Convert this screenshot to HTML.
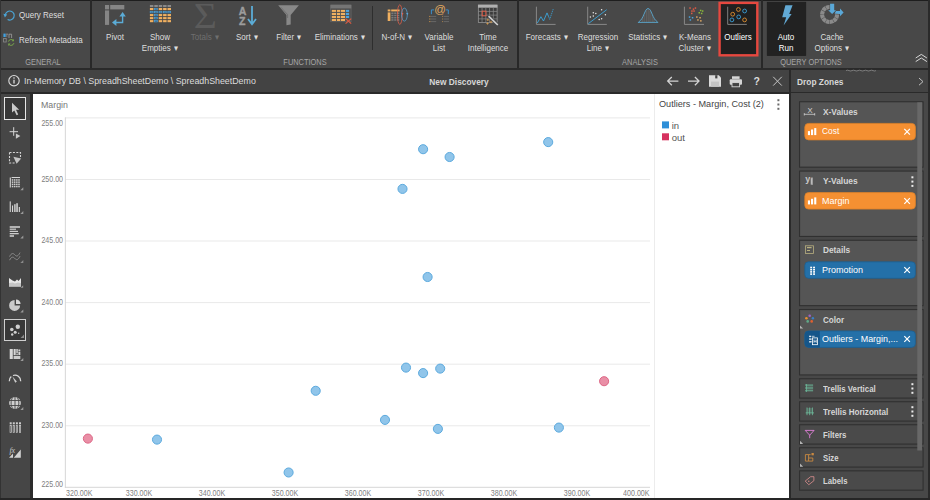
<!DOCTYPE html>
<html>
<head>
<meta charset="utf-8">
<title>Discovery</title>
<style>
html,body{margin:0;padding:0}
html{background:#474747}
body{width:930px;height:500px;position:relative;overflow:hidden;background:#474747;font-family:"Liberation Sans",sans-serif;color:#dcdcdc}
.a{position:absolute}
.t{position:absolute;white-space:pre;line-height:1;transform-origin:0 0}
.c{position:absolute;white-space:pre;line-height:1;transform-origin:50% 0;text-align:center}
/* ribbon */
.rl{font-size:9px;color:#dedede}            /* ribbon label */
.rl.c{transform:translateX(-50%) scaleX(.89)}
.rl.t{transform:scaleX(.89)}
.gl{font-size:9px;color:#a6a6a6}            /* group label */
.gl.c{transform:translateX(-50%) scaleX(.825)}
.dis{color:#6f6f6f}
.rl b{font-weight:normal;margin-left:3.4px}
.ax{font-size:8.2px;color:#808080}
.ax.t{transform:scaleX(.865)}
.ax.c{transform:translateX(-50%) scaleX(.865)}
.ax.r{transform-origin:100% 0;transform:scaleX(.865)}
.zt{font-size:9px;font-weight:bold;color:#d6d6d6}
.chip{position:absolute;left:804px;width:111px;height:17px;border-radius:4px;box-sizing:border-box}
.or{background:#f39233;border:1px solid #e38426}
.bl{background:#2470a8;border:1px solid #1d5f91}
.ct{font-size:9px;color:#fff}
.zone{position:absolute;left:799px;width:124px;box-sizing:border-box;border:1px solid #323232;background:#555}
.zs{background:#484848}
svg{position:absolute;overflow:visible}
</style>
</head>
<body>

<!-- ================= RIBBON ================= -->
<div class="a" style="left:0;top:0;width:930px;height:68px;background:#484848"></div>
<div class="a" style="left:0;top:0;width:930px;height:1px;background:#1e1e1e"></div>
<div class="a" style="left:0;top:68px;width:930px;height:2px;background:#2a2a2a"></div>
<!-- group separators -->
<div class="a" style="left:90px;top:0;width:2px;height:68px;background:#282828"></div>
<div class="a" style="left:517px;top:0;width:2px;height:68px;background:#282828"></div>
<div class="a" style="left:761px;top:0;width:2px;height:68px;background:#282828"></div>
<div class="a" style="left:372px;top:6px;width:1px;height:44px;background:#2e2e2e"></div>

<!-- GENERAL -->
<span class="t rl" style="left:18.6px;top:11px">Query Reset</span>
<span class="t rl" style="left:18.6px;top:35.5px">Refresh Metadata</span>
<span class="c gl" style="left:43.3px;top:57.5px">GENERAL</span>

<!-- FUNCTIONS -->
<span class="c rl" style="left:115.4px;top:33px">Pivot</span>
<span class="c rl" style="left:160.4px;top:33px">Show</span>
<span class="c rl" style="left:160.4px;top:43.5px">Empties<b>▾</b></span>
<span class="c rl dis" style="left:205px;top:33px">Totals<b>▾</b></span>
<span class="c rl" style="left:247px;top:33px">Sort<b>▾</b></span>
<span class="c rl" style="left:289px;top:33px">Filter<b>▾</b></span>
<span class="c rl" style="left:340px;top:33px">Eliminations<b>▾</b></span>
<span class="c rl" style="left:397px;top:33px">N-of-N<b>▾</b></span>
<span class="c rl" style="left:439px;top:33px">Variable</span>
<span class="c rl" style="left:439px;top:43.5px">List</span>
<span class="c rl" style="left:487.5px;top:33px">Time</span>
<span class="c rl" style="left:487.5px;top:43.5px">Intelligence</span>
<span class="c gl" style="left:304.6px;top:57.5px">FUNCTIONS</span>

<!-- ANALYSIS -->
<span class="c rl" style="left:546.5px;top:33px">Forecasts<b>▾</b></span>
<span class="c rl" style="left:598px;top:33px">Regression</span>
<span class="c rl" style="left:598px;top:43.5px">Line<b>▾</b></span>
<span class="c rl" style="left:648px;top:33px">Statistics<b>▾</b></span>
<span class="c rl" style="left:694.7px;top:33px">K-Means</span>
<span class="c rl" style="left:694.7px;top:43.5px">Cluster<b>▾</b></span>
<svg style="left:0;top:0" width="930" height="70" viewBox="0 0 930 70"><rect x="719.6" y="2.9" width="37.7" height="52.4" fill="#202020" stroke="#e6483f" stroke-width="2.4"/><rect x="767.2" y="2.2" width="38.6" height="53.4" fill="#222" stroke="#1c1c1c" stroke-width=".6"/></svg>
<span class="c rl" style="left:738px;top:33px;color:#fff">Outliers</span>
<span class="c gl" style="left:640.3px;top:57.5px">ANALYSIS</span>

<!-- QUERY OPTIONS -->
<span class="c rl" style="left:786.4px;top:33px;color:#fff">Auto</span>
<span class="c rl" style="left:786.4px;top:43.5px;color:#fff">Run</span>
<span class="c rl" style="left:831.5px;top:33px">Cache</span>
<span class="c rl" style="left:831.5px;top:43.5px">Options<b>▾</b></span>
<span class="c gl" style="left:810.5px;top:57.5px">QUERY OPTIONS</span>

<!-- ================= TITLE BAR ================= -->
<div class="a" style="left:0;top:70px;width:930px;height:22px;background:#434343"></div>
<div class="a" style="left:0;top:92px;width:930px;height:2px;background:#2a2a2a"></div>
<span class="t" style="left:23.8px;top:76px;font-size:9.5px;color:#dcdcdc;transform:scaleX(.93)">In-Memory DB \ SpreadhSheetDemo \ SpreadhSheetDemo</span>
<span class="c" style="left:459.2px;top:77px;font-size:9.5px;font-weight:bold;color:#d8d8d8;transform:translateX(-50%) scaleX(.88)">New Discovery</span>
<span class="t" style="left:797px;top:77px;font-size:9.5px;font-weight:bold;color:#d8d8d8;transform:scaleX(.88)">Drop Zones</span>


<!-- ================= RIBBON + TITLE ICONS ================= -->
<svg style="left:0;top:0" width="930" height="96" viewBox="0 0 930 96">
  <!-- query reset -->
  <path d="M5.3 14.6A4.5 4.5 0 1 1 7.6 19.5" fill="none" stroke="#4ba6d8" stroke-width="1.2"/>
  <path d="M3.4 13.7L7.2 14.4L4.9 17.5Z" fill="#4ba6d8"/>
  <!-- refresh metadata -->
  <rect x="3.4" y="33.6" width="2.3" height="3.4" fill="#3fa0e0"/>
  <path d="M6 34.2H8.2M6 36H7.4M9 38V34.2H11.6V38" stroke="#a0a0a0" stroke-width=".8" fill="none"/>
  <rect x="3.6" y="38.4" width="2.6" height="3.6" fill="none" stroke="#8c8c8c" stroke-width=".8"/>
  <path d="M8.3 41.6A3 3 0 0 1 13.2 40.3M13.9 43.2A3 3 0 0 1 9 44.6" fill="none" stroke="#7aa84a" stroke-width="1"/>
  <path d="M13.9 38.9V41.3H11.6ZM8.2 46V43.6H10.5Z" fill="#7aa84a"/>
  <!-- pivot -->
  <rect x="105" y="5" width="4.1" height="4.4" fill="#858585"/>
  <rect x="110.2" y="5" width="14.1" height="4.4" fill="#858585"/>
  <rect x="105" y="10.4" width="4.1" height="14.5" fill="#858585"/>
  <path d="M115.5 22.5H122.6V16" fill="none" stroke="#5bacd6" stroke-width="1.4"/>
  <path d="M112 22.5L116.4 19V26ZM122.6 12L125.8 16.6H119.4Z" fill="#5bacd6"/>
  <!-- show empties -->
  <rect x="149.90" y="5.00" width="3.5" height="2.1" fill="#8a8a8a"/><rect x="154.30" y="5.00" width="3.5" height="2.1" fill="#8a8a8a"/><rect x="158.70" y="5.00" width="3.5" height="2.1" fill="#8a8a8a"/><rect x="163.10" y="5.00" width="3.5" height="2.1" fill="#8a8a8a"/><rect x="167.50" y="5.00" width="3.5" height="2.1" fill="#8a8a8a"/><rect x="149.90" y="8.02" width="3.5" height="2.1" fill="#f0b060"/><rect x="154.60" y="8.32" width="2.9" height="1.5" fill="#3d5566" stroke="#4a9fd8" stroke-width=".7"/><rect x="158.70" y="8.02" width="3.5" height="2.1" fill="#f0b060"/><rect x="163.10" y="8.02" width="3.5" height="2.1" fill="#f0b060"/><rect x="167.50" y="8.02" width="3.5" height="2.1" fill="#f0b060"/><rect x="150.20" y="11.34" width="2.9" height="1.5" fill="#3d5566" stroke="#4a9fd8" stroke-width=".7"/><rect x="154.60" y="11.34" width="2.9" height="1.5" fill="#3d5566" stroke="#4a9fd8" stroke-width=".7"/><rect x="159.00" y="11.34" width="2.9" height="1.5" fill="#3d5566" stroke="#4a9fd8" stroke-width=".7"/><rect x="163.40" y="11.34" width="2.9" height="1.5" fill="#3d5566" stroke="#4a9fd8" stroke-width=".7"/><rect x="167.80" y="11.34" width="2.9" height="1.5" fill="#3d5566" stroke="#4a9fd8" stroke-width=".7"/><rect x="149.90" y="14.06" width="3.5" height="2.1" fill="#f0b060"/><rect x="154.60" y="14.36" width="2.9" height="1.5" fill="#3d5566" stroke="#4a9fd8" stroke-width=".7"/><rect x="158.70" y="14.06" width="3.5" height="2.1" fill="#f0b060"/><rect x="163.10" y="14.06" width="3.5" height="2.1" fill="#f0b060"/><rect x="167.50" y="14.06" width="3.5" height="2.1" fill="#f0b060"/><rect x="149.90" y="17.08" width="3.5" height="2.1" fill="#f0b060"/><rect x="154.60" y="17.38" width="2.9" height="1.5" fill="#3d5566" stroke="#4a9fd8" stroke-width=".7"/><rect x="158.70" y="17.08" width="3.5" height="2.1" fill="#f0b060"/><rect x="163.10" y="17.08" width="3.5" height="2.1" fill="#f0b060"/><rect x="167.50" y="17.08" width="3.5" height="2.1" fill="#f0b060"/><rect x="149.90" y="20.10" width="3.5" height="2.1" fill="#f0b060"/><rect x="154.60" y="20.40" width="2.9" height="1.5" fill="#3d5566" stroke="#4a9fd8" stroke-width=".7"/><rect x="158.70" y="20.10" width="3.5" height="2.1" fill="#f0b060"/><rect x="163.10" y="20.10" width="3.5" height="2.1" fill="#f0b060"/><rect x="167.50" y="20.10" width="3.5" height="2.1" fill="#f0b060"/>
  <!-- totals -->
  <text x="205.2" y="27.7" font-family="Liberation Serif" font-size="35.5" fill="#5b5b5b" text-anchor="middle" transform="translate(205.2 0) scale(1.12 1) translate(-205.2 0)">Σ</text>
  <!-- sort -->
  <text x="242.5" y="14.5" font-family="Liberation Sans" font-weight="bold" font-size="10.6" fill="#9c9c9c" stroke="#9c9c9c" stroke-width=".35" text-anchor="middle">A</text>
  <text x="242.3" y="25" font-family="Liberation Sans" font-weight="bold" font-size="10.6" fill="#9c9c9c" stroke="#9c9c9c" stroke-width=".35" text-anchor="middle">Z</text>
  <path d="M252 5.9V23.4M248 19L252 24.2L256 19" fill="none" stroke="#5bacd6" stroke-width="1.8"/>
  <!-- filter -->
  <path d="M278.2 5.2H298.9L290.7 15V24.6L286.4 25.2V15Z" fill="#888"/>
  <path d="M281 7.3L287.6 14.6V18" fill="none" stroke="#5a5a5a" stroke-width=".5"/>
  <!-- eliminations -->
  <rect x="330.7" y="5" width="20.4" height="16.8" fill="#505050" stroke="#6a6a6a" stroke-width=".6"/><rect x="330.5" y="4.8" width="20.8" height="3.6" fill="#757575"/><rect x="331.8" y="9.9" width="4.30" height="2.00" fill="#f0b060"/><rect x="331.8" y="12.9" width="4.30" height="2.10" fill="#f0b060"/><rect x="331.8" y="15.9" width="4.30" height="2.10" fill="#f0b060"/><rect x="331.8" y="18.9" width="4.30" height="2.10" fill="#f0b060"/><rect x="337" y="9.9" width="3.20" height="2.00" fill="#f0b060"/><rect x="337" y="12.9" width="3.20" height="2.10" fill="#f0b060"/><rect x="337" y="15.9" width="3.20" height="2.10" fill="#f0b060"/><rect x="337" y="18.9" width="3.20" height="2.10" fill="#f0b060"/><rect x="341" y="9.9" width="4.00" height="2.00" fill="#f0b060"/><rect x="341" y="12.9" width="4.00" height="2.10" fill="#f0b060"/><rect x="341" y="15.9" width="4.00" height="2.10" fill="#f0b060"/><rect x="341" y="18.9" width="4.00" height="2.10" fill="#f0b060"/><rect x="345.8" y="9.9" width="3.3" height="2.00" fill="#4aa3df"/><rect x="345.8" y="12.9" width="3.3" height="2.10" fill="#4aa3df"/><rect x="345.8" y="15.9" width="3.3" height="2.10" fill="#4aa3df"/><path d="M345.6 18.6L351.2 23.6M351.2 18.6L345.6 23.6" stroke="#e05a40" stroke-width="1.1" fill="none"/>
  <!-- n-of-n -->
  <rect x="387.7" y="9.5" width="2.7" height="1.9" fill="#f0b060"/><rect x="391.2" y="9.5" width="8.4" height="1.9" fill="#f0b060"/><rect x="387.7" y="12.4" width="2.7" height="8.6" fill="#f0b060"/><rect x="391.30" y="12.50" width="2.2" height="1.5" fill="#7a7a7a"/><rect x="394.20" y="12.50" width="2.2" height="1.5" fill="#7a7a7a"/><rect x="397.10" y="12.50" width="2.2" height="1.5" fill="#7a7a7a"/><rect x="391.30" y="14.75" width="2.2" height="1.5" fill="#7a7a7a"/><rect x="394.20" y="14.75" width="2.2" height="1.5" fill="#7a7a7a"/><rect x="397.10" y="14.75" width="2.2" height="1.5" fill="#7a7a7a"/><rect x="391.30" y="17.00" width="2.2" height="1.5" fill="#7a7a7a"/><rect x="394.20" y="17.00" width="2.2" height="1.5" fill="#7a7a7a"/><rect x="397.10" y="17.00" width="2.2" height="1.5" fill="#7a7a7a"/><rect x="391.30" y="19.25" width="2.2" height="1.5" fill="#7a7a7a"/><rect x="394.20" y="19.25" width="2.2" height="1.5" fill="#7a7a7a"/><rect x="397.10" y="19.25" width="2.2" height="1.5" fill="#7a7a7a"/><ellipse cx="399.8" cy="14.6" rx="2.4" ry="9.8" fill="none" stroke="#e0604a" stroke-width=".8"/><path d="M401.3 12.9h2.2l-1.1 2.4z" fill="#e0604a"/><ellipse cx="404.4" cy="14.6" rx="2.9" ry="6.5" fill="none" stroke="#5aa8dc" stroke-width=".7"/><path d="M406.2 12.9h2.2l-1.1 2.4z" fill="#5aa8dc"/>
  <!-- variable list -->
  <text x="440" y="13.4" font-family="Liberation Sans" font-size="11.5" fill="#e0a860" text-anchor="middle">@</text><path d="M434 9.9H431.4V14.2M445.8 9.9H448.3V14.2" stroke="#3a96d8" stroke-width=".9" fill="none"/><path d="M429 16.4h1.6" stroke="#c8924a" stroke-width=".8"/><path d="M430.8 16.4h5.4" stroke="#6c6c6c" stroke-width=".9"/><path d="M442 16.4h.9" stroke="#c8924a" stroke-width=".8"/><path d="M443.6 16.4h5.4" stroke="#6c6c6c" stroke-width=".9"/><path d="M429 19h1.6" stroke="#c8924a" stroke-width=".8"/><path d="M430.8 19h5.4" stroke="#6c6c6c" stroke-width=".9"/><path d="M442 19h.9" stroke="#c8924a" stroke-width=".8"/><path d="M443.6 19h5.4" stroke="#6c6c6c" stroke-width=".9"/><path d="M429 21.6h1.6" stroke="#c8924a" stroke-width=".8"/><path d="M430.8 21.6h5.4" stroke="#6c6c6c" stroke-width=".9"/><path d="M442 21.6h.9" stroke="#c8924a" stroke-width=".8"/><path d="M443.6 21.6h5.4" stroke="#6c6c6c" stroke-width=".9"/>
  <!-- time intelligence -->
  <rect x="478.3" y="5" width="18.8" height="17.6" fill="#3c3c3c" stroke="#a0a0a0" stroke-width=".7"/><rect x="478" y="4.8" width="19.4" height="2.9" fill="#b0b0b0"/><path d="M482.06 7.7V22.6M485.82 7.7V22.6M489.58 7.7V22.6M493.34 7.7V22.6M478.3 11.42H497.1M478.3 15.14H497.1M478.3 18.86H497.1" stroke="#8c8c8c" stroke-width=".7" fill="none"/><rect x="482.2" y="11.2" width="3.7" height="4.6" fill="#3c3c3c" stroke="#e0604a" stroke-width="1"/><path d="M488.6 16.2L497.8 25" stroke="#484848" stroke-width="3.2"/><path d="M488.6 16.2L497.8 25" stroke="#cfcfcf" stroke-width="1.7"/><path d="M486.6 19.9H489.0M487.8 18.7V21.099999999999998" stroke="#d09a50" stroke-width=".8"/><path d="M489.8 22H492.2M491 20.8V23.2" stroke="#d09a50" stroke-width=".8"/><path d="M486.3 23.5H488.7M487.5 22.3V24.7" stroke="#d09a50" stroke-width=".8"/>
  <!-- forecasts -->
  <path d="M536.4 6.7V24.4H555.6" fill="none" stroke="#909090" stroke-width=".9"/>
  <path d="M537.3 23L540.9 16.7L543.5 21L547 12.9L548.6 16.6" fill="none" stroke="#3aa6dc" stroke-width=".9"/>
  <path d="M548.6 16.6L549.7 19.4L553.2 9.1" fill="none" stroke="#3aa6dc" stroke-width=".9" stroke-dasharray="1.2 .9"/>
  <!-- regression -->
  <path d="M587.7 6.7V24.4H606.8" fill="none" stroke="#909090" stroke-width=".9"/>
  <path d="M588.4 23.6L606.7 9.7" stroke="#3aa6dc" stroke-width=".9"/>
  <g fill="#e8e8e8"><circle cx="593.3" cy="12.7" r=".75"/><circle cx="595.8" cy="13.4" r=".75"/><circle cx="593.3" cy="15.9" r=".75"/><circle cx="590.4" cy="17" r=".75"/><circle cx="601.6" cy="9.7" r=".75"/><circle cx="605.4" cy="14.8" r=".75"/><circle cx="599.2" cy="19.6" r=".75"/><circle cx="601.6" cy="18.8" r=".75"/></g>
  <!-- statistics -->
  <path d="M642.2 18.4V22M644.1 14.6V22M646.2 10.4V22M648.1 8.8V22M650 10.4V22M652.1 14.6V22M654 18.4V22" stroke="#808080" stroke-width=".6"/>
  <path d="M638.6 22C644 19 644.6 8.5 648.1 8.5C651.6 8.5 652.2 19 657.6 22" fill="none" stroke="#5aa8d0" stroke-width=".9"/>
  <path d="M637.9 22.4H658.2" stroke="#5aa8d0" stroke-width=".9"/>
  <!-- k-means -->
  <path d="M684.4 6.7V24.4H704" fill="none" stroke="#909090" stroke-width=".9"/>
  <g fill="#e05a45"><rect x="689.3" y="7.3" width="1.5" height="1.5"/><rect x="692.7" y="8.4" width="1.5" height="1.5"/><rect x="694.7" y="7.3" width="1.5" height="1.5"/><rect x="691.2" y="10.3" width="1.5" height="1.5"/><rect x="693.3" y="10.3" width="1.5" height="1.5"/><rect x="691" y="12.7" width="1.5" height="1.5"/></g>
  <g fill="#8ab83a"><rect x="699.9" y="9.7" width="1.5" height="1.5"/><rect x="701.9" y="10.3" width="1.5" height="1.5"/><rect x="698.5" y="12" width="1.5" height="1.5"/><rect x="700.9" y="12.7" width="1.5" height="1.5"/></g>
  <g fill="#4aa3df"><rect x="688.8" y="16.3" width="1.5" height="1.5"/><rect x="691.8" y="17" width="1.5" height="1.5"/><rect x="689.6" y="19.2" width="1.5" height="1.5"/></g>
  <g fill="#e0a860"><rect x="696.1" y="16.3" width="1.5" height="1.5"/><rect x="699.3" y="17" width="1.5" height="1.5"/><rect x="697.2" y="19.2" width="1.5" height="1.5"/><rect x="700.1" y="20.1" width="1.5" height="1.5"/></g>
  <!-- outliers -->
  <path d="M727.7 6.7V24.4H746.8" fill="none" stroke="#8a8a8a" stroke-width=".9"/>
  <g fill="none" stroke-width=".9"><g stroke="#e09030"><circle cx="738.4" cy="9.5" r="1.9"/><circle cx="732.7" cy="14.2" r="1.9"/><circle cx="744.6" cy="19.9" r="1.9"/></g><g stroke="#3aa0d8"><circle cx="744.6" cy="11" r="1.9"/><circle cx="738.7" cy="16.9" r="1.9"/><circle cx="731.9" cy="19.9" r="1.9"/></g></g>
  <!-- auto run lightning -->
  <path d="M785.4 5.2H792.6L789.2 14H791.6L783.6 25.6L786.2 17.2H782.2Z" fill="#62a9d4"/>
  <!-- cache options -->
  <circle cx="829.6" cy="14.5" r="7.5" fill="none" stroke="#8a8a8a" stroke-width="4.1" stroke-dasharray="3.5 .43" transform="rotate(-90 829.6 14.5)"/>
  <path d="M829.6 14.5L829.6 2L846 2L846 12.2Z" fill="#484848"/>
  <path d="M830.1 3.8H834.2V10.2H836L832.1 13.9L828.2 10.2H830.1Z" fill="#5aa8d8"/>
  <path d="M834.6 13.6L836 10.9H840V8.6L843.6 12.4L840 16.2V13.9Z" fill="#5aa8d8"/>
  <!-- collapse chevrons -->
  <path d="M915.7 58L921.3 54.4L926.9 58M915.7 61.6L921.3 58L926.9 61.6" fill="none" stroke="#d8d8d8" stroke-width="1"/>

  <!-- title bar icons -->
  <circle cx="14" cy="80.7" r="5.2" fill="none" stroke="#dcdcdc" stroke-width="1.1"/>
  <path d="M14 79.8V83.6" stroke="#dcdcdc" stroke-width="1.3"/><circle cx="14" cy="78" r=".8" fill="#dcdcdc"/>
  <path d="M678.4 81.1H668M671.8 77L667.7 81.1L671.8 85.2" fill="none" stroke="#d4d4d4" stroke-width="1.3"/>
  <path d="M688 81.1H698.6M694.9 77L699 81.1L694.9 85.2" fill="none" stroke="#d4d4d4" stroke-width="1.3"/>
  <path d="M709 75.2H718.8L721 77.4V86.8H709Z" fill="#dadada"/>
  <rect x="715.2" y="75.2" width="2.2" height="3.2" fill="#434343"/>
  <rect x="711" y="81.6" width="8" height="5.2" fill="#c4c4c4"/>
  <!-- printer -->
  <rect x="732" y="76.3" width="7.6" height="2.6" fill="#d6d6d6"/>
  <rect x="729.7" y="79.2" width="12.3" height="5.6" rx="1" fill="#d6d6d6"/>
  <rect x="732" y="82.6" width="7.6" height="4.2" fill="#434343" stroke="#d6d6d6" stroke-width=".9"/>
  <text x="756.7" y="84.8" font-family="Liberation Sans" font-weight="bold" font-size="10.5" fill="#dcdcdc" text-anchor="middle">?</text>
  <path d="M773.2 76.8L781.8 85.6M781.8 76.8L773.2 85.6" stroke="#c6c6c6" stroke-width="1"/>
  <path d="M919 78L923 81.6L919 85.2" fill="none" stroke="#c0c0c0" stroke-width="1"/>
  <path d="M846 70.6q1.5-.9 3 0t3 0t3 0t3 0t3 0t3 0t3 0t3 0t3 0t3 0" fill="none" stroke="#a0a0a0" stroke-width=".6"/>
</svg>

<!-- ================= LEFT TOOLBAR ================= -->
<div class="a" style="left:0;top:94px;width:30px;height:406px;background:#464646"></div>
<div class="a" style="left:30px;top:94px;width:2.5px;height:406px;background:#2c2c2c"></div>
<div class="a" style="left:0;top:0;width:1px;height:500px;background:#333"></div>
<div class="a" style="left:928.3px;top:0;width:1.7px;height:500px;background:#2a2a2a;z-index:5"></div>
<div class="a" style="left:4px;top:97px;width:22px;height:23px;box-sizing:border-box;border:1px solid #e6e6e6;background:#383838"></div>
<div class="a" style="left:4px;top:318.5px;width:22px;height:22px;box-sizing:border-box;border:1px solid #cfcfcf;background:#383838"></div>

<svg style="left:0;top:0" width="34" height="500" viewBox="0 0 34 500">
  <path d="M12 102.8V112.4L14.3 110.4L16.6 115.2L18.2 114.4L16 109.8H19.2Z" fill="#cacaca"/>
  <path d="M9.6 131.7H18M13.7 127.2V135.8" stroke="#d6d6d6" stroke-width="1" fill="none"/>
  <path d="M15.9 133.4L20.4 136L15.9 138.8Z" fill="#c8c8c8"/>
  <path d="M9.5 152.5H20.5V158" stroke="#d6d6d6" stroke-width="1.1" fill="none" stroke-dasharray="2 1.4"/>
  <path d="M9.5 152.5V163H15" stroke="#d6d6d6" stroke-width="1.1" fill="none" stroke-dasharray="2 1.4"/>
  <path d="M13.4 156.8L21.2 158.4L16.6 163.8Z" fill="#c4c4c4"/>
  <path d="M10.3 177.4V187.6" stroke="#d6d6d6" stroke-width="1.1"/><path d="M11.6 177.5H20" stroke="#d6d6d6" stroke-width="1"/><rect x="11.80" y="179.20" width="1.5" height="1.5" fill="#cfcfcf"/><rect x="13.95" y="179.20" width="1.5" height="1.5" fill="#cfcfcf"/><rect x="16.10" y="179.20" width="1.5" height="1.5" fill="#cfcfcf"/><rect x="18.25" y="179.20" width="1.5" height="1.5" fill="#cfcfcf"/><rect x="11.80" y="181.40" width="1.5" height="1.5" fill="#cfcfcf"/><rect x="13.95" y="181.40" width="1.5" height="1.5" fill="#cfcfcf"/><rect x="16.10" y="181.40" width="1.5" height="1.5" fill="#cfcfcf"/><rect x="18.25" y="181.40" width="1.5" height="1.5" fill="#cfcfcf"/><rect x="11.80" y="183.60" width="1.5" height="1.5" fill="#cfcfcf"/><rect x="13.95" y="183.60" width="1.5" height="1.5" fill="#cfcfcf"/><rect x="16.10" y="183.60" width="1.5" height="1.5" fill="#cfcfcf"/><rect x="18.25" y="183.60" width="1.5" height="1.5" fill="#cfcfcf"/><rect x="11.80" y="185.80" width="1.5" height="1.5" fill="#cfcfcf"/><rect x="13.95" y="185.80" width="1.5" height="1.5" fill="#cfcfcf"/><rect x="16.10" y="185.80" width="1.5" height="1.5" fill="#cfcfcf"/><rect x="18.25" y="185.80" width="1.5" height="1.5" fill="#cfcfcf"/>
  <path d="M23.3 187.2V190.2H20.3Z" fill="#9a9a9a"/>
  <rect x="9.7" y="201.4" width="1.1" height="10.6" fill="#d6d6d6"/>
  <rect x="12" y="205.5" width="1.1" height="6.5" fill="#d6d6d6"/>
  <rect x="14.2" y="204.2" width="1.4" height="7.8" fill="#d6d6d6"/>
  <rect x="16.3" y="203.2" width="1.5" height="8.8" fill="#d6d6d6"/>
  <rect x="18.8" y="207" width="1.1" height="5.0" fill="#d6d6d6"/>
  <path d="M23.3 211V214H20.3Z" fill="#9a9a9a"/>
  <rect x="9.7" y="226.2" width="10.3" height="1.6" fill="#cdcdcd"/>
  <rect x="9.7" y="228.6" width="6.3" height="1.2" fill="#cdcdcd"/>
  <rect x="9.7" y="230.8" width="8.3" height="1.2" fill="#cdcdcd"/>
  <rect x="9.7" y="233" width="9.0" height="1.3" fill="#cdcdcd"/>
  <rect x="9.7" y="235.2" width="4.3" height="1.6" fill="#cdcdcd"/>
  <path d="M23.3 235.5V238.5H20.3Z" fill="#9a9a9a"/>
  <path d="M9.6 256.6C11.5 252.5 13.5 253.2 15 255C16.5 256.8 18.2 256.4 20 252.6M9.6 260.2C11.5 256.1 13.5 256.8 15 258.6C16.5 260.4 18.2 260 20 256.2" stroke="#8c8c8c" stroke-width="1" fill="none"/>
  <path d="M23.3 260V263H20.3Z" fill="#8a8a8a"/>
  <path d="M9 278L12.5 280.6L15 281.6L17 279.6L18.6 281L21 278V286.6H9Z" fill="#e6e6e6"/>
  <path d="M9 283L12.5 282.6L15 283.4L18 282.4L21 283.2V286.6H9Z" fill="#c4c4c4"/>
  <path d="M23.200000000000003 285.2V287.8H20.6Z" fill="#9a9a9a"/>
  <path d="M14.6 305.4V299.9A5.5 5.5 0 1 0 20.1 305.4Z" fill="#cacaca"/>
  <path d="M16 304V299.4A4.6 4.6 0 0 1 20.6 304Z" fill="#d8d8d8"/>
  <path d="M23.3 309.5V312.5H20.3Z" fill="#9a9a9a"/>
  <circle cx="17.8" cy="326.8" r="2.2" fill="#d0d0d0"/>
  <circle cx="11.8" cy="329.5" r="1.8" fill="#d0d0d0"/>
  <circle cx="15.2" cy="332.2" r="1.5" fill="#d0d0d0"/>
  <circle cx="12.2" cy="334.5" r="1.2" fill="#d0d0d0"/>
  <circle cx="18.7" cy="333.3" r="0.7" fill="#d0d0d0"/>
  <path d="M24.0 334.6V338.0H20.6Z" fill="#8a8a8a"/>
  <rect x="9.7" y="349" width="3.1" height="10" fill="#d8d8d8"/><rect x="13.6" y="349" width="2.1" height="6.2" fill="#d8d8d8"/><rect x="16.3" y="349" width="1.5" height="4" fill="#d0d0d0"/><rect x="18.4" y="349.5" width="1.9" height="1.5" fill="#d0d0d0"/><rect x="18.4" y="351.6" width="1.9" height="3.5" fill="#d8d8d8"/><rect x="16.3" y="353.6" width="1.5" height="1.6" fill="#c8c8c8"/><rect x="13.6" y="356" width="6.7" height="3" fill="#cccccc"/>
  <path d="M23.3 358V361H20.3Z" fill="#9a9a9a"/>
  <path d="M9.3 381.2A5.8 5.8 0 0 1 11.3 376.6M13 375.5A5.8 5.8 0 0 1 20.7 381.2" stroke="#d8d8d8" stroke-width="1.3" fill="none"/>
  <path d="M12.3 376.2L16.9 381.6L15.2 382.8Z" fill="#cccccc"/>
  <circle cx="15" cy="403" r="5.9" fill="#cfcfcf"/>
  <path d="M9 400.5H21M9 405.5H21M15 397V409" stroke="#464646" stroke-width=".9" fill="none"/>
  <path d="M12.6 397.5C10.6 401 10.6 405 12.6 408.5M17.4 397.5C19.4 401 19.4 405 17.4 408.5" stroke="#464646" stroke-width=".9" fill="none"/>
  <path d="M23.3 407V410H20.3Z" fill="#9a9a9a"/>
  <rect x="9.7" y="422.3" width="2" height="2" fill="#cccccc"/><rect x="10.049999999999999" y="425.4" width="1.3" height="7" fill="none" stroke="#cccccc" stroke-width=".7"/>
  <rect x="12.8" y="422.3" width="2" height="2" fill="#cccccc"/><rect x="13.15" y="425.4" width="1.3" height="7" fill="none" stroke="#cccccc" stroke-width=".7"/>
  <rect x="15.9" y="422.3" width="2" height="2" fill="#cccccc"/><rect x="16.25" y="425.4" width="1.3" height="7" fill="none" stroke="#cccccc" stroke-width=".7"/>
  <rect x="19" y="422.3" width="2" height="2" fill="#cccccc"/><rect x="19.35" y="425.4" width="1.3" height="7" fill="none" stroke="#cccccc" stroke-width=".7"/>
  <text x="9.4" y="453" font-family="Liberation Serif" font-style="italic" font-size="8" fill="#cacaca">fx</text>
  <path d="M9 457.7L13 453.4V457.7ZM13.8 457.7L20.8 449.4V457.7Z" fill="#d2d2d2"/>
</svg>

<!-- ================= CHART PANEL ================= -->
<div class="a" style="left:32.5px;top:94px;width:756.5px;height:404.2px;background:#fff"></div>
<div class="a" style="left:0;top:498.2px;width:930px;height:1.8px;background:#262626;z-index:5"></div>
<span class="t" style="left:41px;top:100.5px;font-size:9px;color:#777;transform:scaleX(.98)">Margin</span>

<svg style="left:0;top:0" width="930" height="500" viewBox="0 0 930 500">
  <g stroke="#e9e9e9" stroke-width="1" fill="none">
    <path d="M65 117.9H650M65 179.5H650M65 241H650M65 302.6H650M65 364.2H650M65 425.8H650"/>
  </g>
  <path d="M65.35 117.4V487.8M64.9 487.3H650" stroke="#d6d6d6" stroke-width="1" fill="none"/>
  <path d="M654.5 94V498" stroke="#ececec" stroke-width="1" fill="none"/>
  <rect x="662" y="121.4" width="7" height="7" fill="#2e8fd8"/><rect x="662" y="133.3" width="7" height="7" fill="#d6325f"/>
  <g fill="#90c5ea" stroke="#5caade" stroke-width="1">
    <circle cx="157.0" cy="439.6" r="4.55"/>
    <circle cx="288.6" cy="472.5" r="4.55"/>
    <circle cx="315.7" cy="390.8" r="4.55"/>
    <circle cx="406.0" cy="367.6" r="4.55"/>
    <circle cx="423.1" cy="373.1" r="4.55"/>
    <circle cx="440.2" cy="368.6" r="4.55"/>
    <circle cx="385.0" cy="419.9" r="4.55"/>
    <circle cx="437.9" cy="428.9" r="4.55"/>
    <circle cx="558.9" cy="427.6" r="4.55"/>
    <circle cx="423.1" cy="149.2" r="4.55"/>
    <circle cx="449.6" cy="157.0" r="4.55"/>
    <circle cx="548.2" cy="142.1" r="4.55"/>
    <circle cx="402.5" cy="188.9" r="4.55"/>
    <circle cx="427.6" cy="277.0" r="4.55"/>
  </g>
  <g fill="#e98fa6" stroke="#dd6685" stroke-width="1">
    <circle cx="87.9" cy="438.6" r="4.55"/>
    <circle cx="604.1" cy="381.2" r="4.55"/>
  </g>
</svg>

<!-- y labels -->
<span class="t ax r" style="right:866.5px;top:119.5px">255.00</span>
<span class="t ax r" style="right:866.5px;top:176px">250.00</span>
<span class="t ax r" style="right:866.5px;top:236.5px">245.00</span>
<span class="t ax r" style="right:866.5px;top:299px">240.00</span>
<span class="t ax r" style="right:866.5px;top:359.5px">235.00</span>
<span class="t ax r" style="right:866.5px;top:422px">230.00</span>
<span class="t ax r" style="right:866.5px;top:480.5px">225.00</span>
<!-- x labels -->
<span class="t ax" style="left:65.5px;top:489.5px">320.00K</span>
<span class="c ax" style="left:139px;top:489.5px">330.00K</span>
<span class="c ax" style="left:212px;top:489.5px">340.00K</span>
<span class="c ax" style="left:285px;top:489.5px">350.00K</span>
<span class="c ax" style="left:358px;top:489.5px">360.00K</span>
<span class="c ax" style="left:431px;top:489.5px">370.00K</span>
<span class="c ax" style="left:504px;top:489.5px">380.00K</span>
<span class="c ax" style="left:577px;top:489.5px">390.00K</span>
<span class="t ax r" style="right:280.5px;top:489.5px">400.00K</span>

<!-- legend -->
<span class="t" style="left:659.2px;top:98.6px;font-size:9.5px;color:#444;transform:scaleX(.96)">Outliers - Margin, Cost (2)</span>
<span class="t" style="left:671.7px;top:121px;font-size:9.5px;color:#555">in</span>
<span class="t" style="left:671.7px;top:133px;font-size:9.5px;color:#555">out</span>

<!-- ================= DROP ZONES ================= -->
<div class="a" style="left:789px;top:70px;width:2px;height:430px;background:#2a2a2a"></div>
<div class="a" style="left:791px;top:93px;width:139px;height:405.2px;background:#484848"></div>


<svg style="left:0;top:0" width="930" height="500" viewBox="0 0 930 500">
  <rect x="799.55" y="101.75" width="123.5" height="65.40" fill="#555555" stroke="#303030" stroke-width="1.1"/>
  <rect x="799.55" y="171.05" width="123.5" height="65.40" fill="#555555" stroke="#303030" stroke-width="1.1"/>
  <rect x="799.55" y="240.25" width="123.5" height="65.40" fill="#555555" stroke="#303030" stroke-width="1.1"/>
  <rect x="799.55" y="309.55" width="123.5" height="65.40" fill="#555555" stroke="#303030" stroke-width="1.1"/>
  <rect x="799.55" y="378.75" width="123.5" height="19.30" fill="#4a4a4a" stroke="#303030" stroke-width="1.1"/>
  <rect x="799.55" y="401.75" width="123.5" height="19.30" fill="#4a4a4a" stroke="#303030" stroke-width="1.1"/>
  <rect x="799.55" y="424.75" width="123.5" height="19.30" fill="#4a4a4a" stroke="#303030" stroke-width="1.1"/>
  <rect x="799.55" y="447.75" width="123.5" height="19.30" fill="#4a4a4a" stroke="#303030" stroke-width="1.1"/>
  <rect x="799.55" y="470.85" width="123.5" height="19.30" fill="#4a4a4a" stroke="#303030" stroke-width="1.1"/>
  <rect x="804.8" y="123.40" width="110.6" height="16.5" rx="3.8" fill="#f59032" stroke="#dd8128" stroke-width=".8"/>
  <rect x="804.8" y="192.60" width="110.6" height="16.5" rx="3.8" fill="#f59032" stroke="#dd8128" stroke-width=".8"/>
  <rect x="804.8" y="261.80" width="110.6" height="16.5" rx="3.8" fill="#2470a8" stroke="#1c5f92" stroke-width=".8"/>
  <rect x="804.8" y="330.90" width="110.6" height="16.5" rx="3.8" fill="#2470a8" stroke="#1c5f92" stroke-width=".8"/>
  <path d="M819.8 330.9V347.4H808.6A3.8 3.8 0 0 1 804.8 343.6V334.7A3.8 3.8 0 0 1 808.6 330.9Z" fill="#15568a"/>
  <rect x="917.3" y="102.3" width="4.8" height="348.2" fill="#686868"/>
</svg>
<span class="t zt" style="left:822.8px;top:108px;transform:scaleX(0.925)">X-Values</span>
<span class="t zt" style="left:822.8px;top:177px;transform:scaleX(0.937)">Y-Values</span>
<span class="t zt" style="left:822.8px;top:246px;transform:scaleX(0.922)">Details</span>
<span class="t zt" style="left:822.8px;top:316px;transform:scaleX(0.902)">Color</span>
<span class="t zt" style="left:822.8px;top:385px;transform:scaleX(0.87)">Trellis Vertical</span>
<span class="t zt" style="left:822.8px;top:408px;transform:scaleX(0.9)">Trellis Horizontal</span>
<span class="t zt" style="left:822.8px;top:431px;transform:scaleX(0.866)">Filters</span>
<span class="t zt" style="left:822.8px;top:454px;transform:scaleX(0.86)">Size</span>
<span class="t zt" style="left:822.8px;top:477px;transform:scaleX(0.859)">Labels</span>

<span class="t ct" style="left:822px;top:127px;transform:scaleX(0.93)">Cost</span>
<span class="t ct" style="left:822px;top:197px;transform:scaleX(1.0)">Margin</span>
<span class="t ct" style="left:822px;top:266px;transform:scaleX(1.0)">Promotion</span>
<span class="t ct" style="left:822px;top:335px;transform:scaleX(0.992)">Outliers - Margin,...</span>

<svg style="left:0;top:0;z-index:3" width="930" height="500" viewBox="0 0 930 500">
  <text x="810" y="112.7" font-family="Liberation Sans" font-size="7.6" fill="#d8d8d8" text-anchor="middle">X</text>
  <path d="M804.2 114.3H814.8M804.3 113.1V115.5M814.7 113.1V115.5" stroke="#cfcfcf" stroke-width=".8" fill="none"/>
  <text x="807.7" y="182" font-family="Liberation Sans" font-weight="bold" font-size="9" fill="#c8c8c8" text-anchor="middle">y</text>
  <path d="M811.7 177.8V184.6" stroke="#bcbcbc" stroke-width="2"/><path d="M811 178H813M811 184.3H813" stroke="#a0a0a0" stroke-width=".7"/>
  <rect x="805.6" y="245.8" width="8" height="7.7" fill="none" stroke="#b8b080" stroke-width=".8"/>
  <path d="M807 247.6H811.6" stroke="#b8b080" stroke-width="1.2"/><path d="M807 250.5H810" stroke="#b8b080" stroke-width="1"/>
  <circle cx="809.7" cy="315.8" r="1.3" fill="#a060c8"/><circle cx="806.4" cy="318.3" r="1.3" fill="#e89030"/><circle cx="812.9" cy="318.3" r="1.2" fill="#3a80c8"/><circle cx="807.7" cy="321.4" r="1.3" fill="#60a888"/><circle cx="811.7" cy="321.4" r="1.3" fill="#e06030"/>
  <path d="M800 325.4V328.59999999999997H803.2Z" fill="#b6b6b6"/>
  <rect x="806.3" y="385" width="6.8" height="5.7" fill="#70c0a0" opacity=".25"/>
  <path d="M806.4 384.1V392M805 385H813.1M805 388H813.1M805 390.8H813.1" stroke="#70c0a0" stroke-width=".8" fill="none"/>
  <rect x="807" y="408" width="5.4" height="4.8" fill="#70c0a0" opacity=".25"/>
  <path d="M805.7 412.9H814M807 407.5V415.2M809.7 407.5V415.2M812.4 407.5V415.2" stroke="#70c0a0" stroke-width=".8" fill="none"/>
  <path d="M805.2 430.4H814.1L809.7 435.2ZM809.7 435V438.2" stroke="#e080d8" stroke-width=".9" fill="none" stroke-linejoin="round"/>
  <path d="M800 440.7V443.9H803.2Z" fill="#b6b6b6"/>
  <path d="M805.4 454.6H808.6V461.1H805.4ZM808.6 458H812.8V461.1H808.6M808.6 454.6H810.6" stroke="#d89040" stroke-width=".8" fill="none"/>
  <rect x="811.5" y="453" width="2.3" height="2.3" fill="#d89040" opacity=".9"/>
  <path d="M800 463.6V466.8H803.2Z" fill="#b6b6b6"/>
  <path d="M805.2 481.1L810.6 476.7H813.9V480.7L808.8 484.7Z" stroke="#e09090" stroke-width=".8" fill="none" stroke-linejoin="round"/><circle cx="808.8" cy="481.3" r=".7" fill="#e09090"/>
  <rect x="807.9" y="131.1" width="2.1" height="4" fill="#fff"/><rect x="811" y="129.5" width="2.1" height="5.6" fill="#fff"/><rect x="814.2" y="128.1" width="2.1" height="7" fill="#fff"/>
  <rect x="807.9" y="200.4" width="2.1" height="4" fill="#fff"/><rect x="811" y="198.8" width="2.1" height="5.6" fill="#fff"/><rect x="814.2" y="197.4" width="2.1" height="7" fill="#fff"/>
  <path d="M904.3 128.9L909.9 134.6M909.9 128.9L904.3 134.6" stroke="#fff" stroke-width="1.2"/>
  <path d="M904.3 198.20000000000002L909.9 203.9M909.9 198.20000000000002L904.3 203.9" stroke="#fff" stroke-width="1.2"/>
  <path d="M904.3 267.2L909.9 272.90000000000003M909.9 267.2L904.3 272.90000000000003" stroke="#fff" stroke-width="1.2"/>
  <path d="M904.3 336.2L909.9 341.90000000000003M909.9 336.2L904.3 341.90000000000003" stroke="#fff" stroke-width="1.2"/>
  <rect x="810.2" y="266.7" width="1.9" height="1.6" fill="#fff"/>
  <rect x="813.1" y="266.7" width="1.9" height="1.6" fill="#fff"/>
  <rect x="810.2" y="268.9" width="1.9" height="1.6" fill="#fff"/>
  <rect x="813.1" y="268.9" width="1.9" height="1.6" fill="#fff"/>
  <rect x="810.2" y="271.1" width="1.9" height="1.6" fill="#fff"/>
  <rect x="813.1" y="271.1" width="1.9" height="1.6" fill="#fff"/>
  <rect x="810.2" y="273.3" width="1.9" height="1.6" fill="#fff"/>
  <rect x="813.1" y="273.3" width="1.9" height="1.6" fill="#fff"/>
  <rect x="809.2" y="335.7" width="1.7" height="1.4" fill="#fff"/><rect x="809.2" y="338.4" width="1.7" height="1.4" fill="#fff"/><rect x="809.2" y="341.1" width="1.7" height="1.4" fill="#fff"/>
  <path d="M811.6 336.3H814.6M811 339.1H812.4M811 341.8H812.4" stroke="#fff" stroke-width=".7"/>
  <rect x="812.6" y="337.9" width="5" height="6.8" fill="#15568a" stroke="#fff" stroke-width=".8"/>
  <path d="M814 339.6V342.8M816.2 339.6V342.8M814 341.3H816.2" stroke="#fff" stroke-width=".7" fill="none"/>
  <rect x="911.4" y="176.3" width="2" height="2" fill="#ececec"/><rect x="911.4" y="180.6" width="2" height="2" fill="#ececec"/><rect x="911.4" y="184.9" width="2" height="2" fill="#ececec"/>
  <rect x="911.4" y="383.2" width="2" height="2" fill="#ececec"/><rect x="911.4" y="387.5" width="2" height="2" fill="#ececec"/><rect x="911.4" y="391.8" width="2" height="2" fill="#ececec"/>
  <rect x="911.4" y="406.2" width="2" height="2" fill="#ececec"/><rect x="911.4" y="410.5" width="2" height="2" fill="#ececec"/><rect x="911.4" y="414.8" width="2" height="2" fill="#ececec"/>
  <rect x="777.4" y="99.2" width="2" height="2" fill="#6a6a6a"/><rect x="777.4" y="103.5" width="2" height="2" fill="#6a6a6a"/><rect x="777.4" y="107.8" width="2" height="2" fill="#6a6a6a"/>
</svg>
</body>
</html>
